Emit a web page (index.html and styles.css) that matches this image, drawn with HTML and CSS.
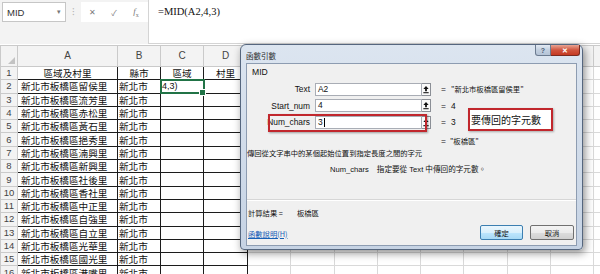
FILE: index.html
```html
<!DOCTYPE html>
<html lang="zh-Hant">
<head>
    <meta charset="UTF-8">
    <title>函數引數 - MID</title>
    <link rel="stylesheet" href="styles.css">
</head>
<body>
    <div class="topbar">
        <div class="namebox"><span>MID</span><span class="drop">▾</span></div>
        <div class="grip">⁝</div>
        <div class="fxbtns">
            <span class="ico">✕</span>
            <span class="ico">✓</span>
            <span class="ico fx"><i>f</i><sub>x</sub></span>
        </div>
        <div class="formula">=MID(A2,4,3)</div>
    </div>

    <table class="sheet">
        <colgroup>
            <col style="width:17px"><col style="width:100px"><col style="width:43px"><col style="width:43px"><col style="width:44px">
            <col class="c"><col class="c"><col class="c"><col class="c"><col class="c"><col class="c"><col class="c"><col class="c">
            <col class="last">
        </colgroup>
        <thead>
            <tr>
                <th class="corner"></th>
                <th>A</th><th>B</th><th>C</th><th>D</th><th>E</th><th>F</th><th>G</th>
                <th>H</th><th>I</th><th>J</th><th>K</th><th>L</th><th></th>
            </tr>
        </thead>
        <tbody id="sheetBody"></tbody>
    </table>

    <div class="dialog">
        <div class="titlebar">
            <span class="title">函數引數</span>
            <div class="caption">
                <span class="cap help">?</span>
                <span class="cap close">✕</span>
            </div>
        </div>
        <div class="client">
            <div class="group">
                <div class="fname">MID</div>
                <div class="args">
                    <div class="arg">
                        <label>Text</label>
                        <div class="input">A2</div>
                        <span class="ref"><svg width="9" height="13" viewBox="0 0 9 13"><path d="M4.5 2.5 L1.5 6 H3.5 V8.5 H5.5 V6 H7.5 Z" fill="#111"/><rect x="1.5" y="9.5" width="6" height="1.2" fill="#111"/></svg></span>
                        <span class="eq">=</span>
                        <span class="val cjk">"新北市板橋區留侯里"</span>
                    </div>
                    <div class="arg">
                        <label>Start_num</label>
                        <div class="input">4</div>
                        <span class="ref"><svg width="9" height="13" viewBox="0 0 9 13"><path d="M4.5 2.5 L1.5 6 H3.5 V8.5 H5.5 V6 H7.5 Z" fill="#111"/><rect x="1.5" y="9.5" width="6" height="1.2" fill="#111"/></svg></span>
                        <span class="eq">=</span>
                        <span class="val">4</span>
                    </div>
                    <div class="arg">
                        <span class="hlbox"></span>
                        <label>Num_chars</label>
                        <div class="input">3<span class="caret"></span></div>
                        <span class="ref"><svg width="9" height="13" viewBox="0 0 9 13"><path d="M4.5 2.5 L1.5 6 H3.5 V8.5 H5.5 V6 H7.5 Z" fill="#111"/><rect x="1.5" y="9.5" width="6" height="1.2" fill="#111"/></svg></span>
                        <span class="eq">=</span>
                        <span class="val">3</span>
                        <span class="note">要傳回的字元數</span>
                    </div>
                </div>
                <div class="result"><span class="eq">=</span><span class="val cjk">"板橋區"</span></div>
                <div class="desc">傳回從文字串中的某個起始位置到指定長度之間的字元</div>
                <div class="argdesc"><span class="argname">Num_chars</span>指定要從 Text 中傳回的字元數。</div>
            </div>
            <div class="calc"><span>計算結果 =</span><span class="calc-val">板橋區</span></div>
            <div class="footer">
                <a class="help-link">函數說明(H)</a>
                <div class="buttons">
                    <button class="btn default">確定</button>
                    <button class="btn">取消</button>
                </div>
            </div>
        </div>
    </div>

    <script>
        // sheet content, row 1 is the header row
        const rows = [
            ['區域及村里', '縣市', '區域', '村里'],
            ['新北市板橋區留侯里', '新北市', '4,3)', ''],
            ['新北市板橋區流芳里', '新北市', '', ''],
            ['新北市板橋區赤松里', '新北市', '', ''],
            ['新北市板橋區黃石里', '新北市', '', ''],
            ['新北市板橋區挹秀里', '新北市', '', ''],
            ['新北市板橋區湳興里', '新北市', '', ''],
            ['新北市板橋區新興里', '新北市', '', ''],
            ['新北市板橋區社後里', '新北市', '', ''],
            ['新北市板橋區香社里', '新北市', '', ''],
            ['新北市板橋區中正里', '新北市', '', ''],
            ['新北市板橋區自強里', '新北市', '', ''],
            ['新北市板橋區自立里', '新北市', '', ''],
            ['新北市板橋區光華里', '新北市', '', ''],
            ['新北市板橋區國光里', '新北市', '', ''],
            ['新北市板橋區港嘴里', '新北市', '', '']
        ];
        const emptyCols = 9;

        // build the rows of the sheet
        const body = document.getElementById('sheetBody');
        rows.forEach(function(row, i) {
            let html = '<th>' + (i + 1) + '</th>';
            row.forEach(function(value, c) {
                let cls = 'b';
                if (i === 0) cls += ' head';
                else if (c === 0) cls += ' name';
                if (i === 1 && c === 2) cls += ' sel';
                html += '<td class="' + cls + '">' + value + '</td>';
            });
            html += '<td></td>'.repeat(emptyCols);
            const tr = document.createElement('tr');
            tr.innerHTML = html;
            body.appendChild(tr);
        });
    </script>
</body>
</html>
```

FILE: styles.css
```css
* {
    box-sizing: border-box;
}

body {
    margin: 0;
    width: 600px;
    height: 274px;
    overflow: hidden;
    position: relative;
    background-color: #fff;
    font-family: 'Liberation Sans', 'Noto Sans CJK TC', sans-serif;
}

/* formula bar */
.topbar {
    display: flex;
    height: 44px;
    background-color: #f3f3f3;
}

.namebox {
    margin: 2px 0 0 2px;
    width: 64px;
    height: 20px;
    background-color: #fff;
    border: 1px solid #c6c6c6;
    display: flex;
    align-items: center;
    justify-content: space-between;
    padding: 0 4px;
    font-size: 9.5px;
    color: #333;
}

.namebox .drop {
    font-size: 7px;
    color: #777;
}

.grip {
    width: 15px;
    text-align: center;
    color: #b5b5b5;
    font-size: 10px;
    line-height: 24px;
}

.fxbtns {
    display: flex;
    align-items: center;
    height: 20px;
    margin-top: 2px;
    width: 67px;
    background-color: #fff;
}

.ico {
    width: 22px;
    text-align: center;
    font-size: 8px;
    color: #7a7a7a;
}

.ico.fx {
    font-family: 'Liberation Serif', serif;
    font-size: 9px;
}

.ico.fx sub {
    font-size: 6px;
}

.formula {
    flex: 1;
    height: 44px;
    background-color: #fff;
    border-left: 1px solid #d4d4d4;
    border-bottom: 1px solid #d4d4d4;
    padding: 5px 0 0 9px;
    font-family: 'Liberation Serif', serif;
    font-size: 10.5px;
    line-height: 14px;
    color: #111;
}

/* worksheet */
.sheet {
    margin-top: 1px;
    border-collapse: collapse;
    table-layout: fixed;
    width: 600px;
    font-family: 'Noto Sans CJK TC', sans-serif;
    font-size: 9.6px;
    color: #111;
}

.sheet col.c {
    width: 43.3px;
}

.sheet col.last {
    width: 6.6px;
}

.sheet th,
.sheet td {
    padding: 0;
    border: 1px solid #d9d9d9;
    height: 13.3px;
    line-height: 12px;
    white-space: nowrap;
    overflow: hidden;
}

.sheet th {
    background-color: #f3f3f3;
    font-family: 'Liberation Sans', sans-serif;
    font-weight: normal;
    color: #444;
    font-size: 9.5px;
    border-color: #cacaca;
}

.sheet thead th {
    height: 21px;
    font-size: 10px;
}

.sheet th.corner {
    position: relative;
}

.sheet th.corner::after {
    content: '';
    position: absolute;
    right: 2px;
    bottom: 2px;
    border-left: 7px solid transparent;
    border-bottom: 7px solid #c3c3c3;
}

.sheet td.b {
    border-color: #1c1c1c;
    padding-left: 1px;
}

.sheet td.head {
    text-align: center;
    padding-left: 0;
}

.sheet td.name {
    padding-left: 3px;
}

.sheet td.sel {
    outline: 2px solid #217346;
    outline-offset: -1px;
    position: relative;
    overflow: visible;
    font-family: 'Liberation Sans', sans-serif;
    font-size: 9px;
}

.sheet td.sel::after {
    content: '';
    position: absolute;
    right: -3px;
    bottom: -3px;
    width: 5px;
    height: 5px;
    background-color: #217346;
    border: 1px solid #fff;
}

/* function arguments dialog */
.dialog {
    position: absolute;
    left: 240px;
    top: 44px;
    width: 343px;
    height: 206px;
    padding: 0 5px 3px;
    display: flex;
    flex-direction: column;
    border: 1px solid #55667e;
    border-radius: 6px 6px 4px 4px;
    background: linear-gradient(#dce5f0, #c6d3e4);
    box-shadow: 2px 3px 8px rgba(0,0,0,0.45);
}

.titlebar {
    height: 18px;
    position: relative;
}

.title {
    font-family: 'Noto Sans CJK TC', sans-serif;
    font-size: 7.5px;
    line-height: 18px;
    color: #1e1e1e;
}

.caption {
    position: absolute;
    right: -3px;
    top: 0;
    display: flex;
}

.cap {
    height: 11px;
    display: flex;
    align-items: center;
    justify-content: center;
    color: #fff;
    font-size: 7px;
    line-height: 7px;
    font-weight: bold;
    border: 1px solid #6b7b90;
    border-top: none;
    overflow: hidden;
}

.cap.help {
    width: 16px;
    border-radius: 0 0 0 3px;
    background: linear-gradient(#e3eaf3, #c2cfdf 50%, #b5c4d7);
    color: #4c5d74;
}

.cap.close {
    width: 29px;
    border-left: none;
    border-radius: 0 0 3px 0;
    background: linear-gradient(#e9a493, #d0553f 50%, #c53a22);
    border-color: #7a2a1f;
    font-size: 6.5px;
}

.client {
    height: 183px;
    background-color: #f0f0f0;
    border: 1px solid #8d9cb1;
    display: flex;
    flex-direction: column;
    font-size: 8.4px;
    color: #111;
}

.cjk {
    font-family: 'Noto Sans CJK TC', sans-serif;
    font-size: 7.3px;
}

.group {
    height: 136px;
    border-bottom: 1px solid #d6d6d6;
    box-shadow: 0 1px 0 #fff;
}

.fname {
    height: 17px;
    line-height: 17px;
    padding-left: 5px;
    font-size: 8.6px;
}

.arg {
    position: relative;
    display: grid;
    grid-template-columns: 68px 107px 9px 20px 1fr;
    align-items: center;
    height: 16.5px;
}

.arg label {
    text-align: right;
    padding-right: 5px;
}

.input {
    height: 13px;
    line-height: 11px;
    background-color: #fff;
    border: 1px solid #a9adb5;
    padding-left: 2px;
    display: flex;
    align-items: center;
}

.caret {
    display: inline-block;
    width: 1px;
    height: 9px;
    background-color: #000;
    margin-left: 1px;
}

.ref {
    height: 13px;
    background-color: #fafafa;
    border: 1px solid #8b8f96;
    border-left: none;
    display: flex;
    align-items: center;
    justify-content: center;
}

.ref svg {
    display: block;
}

.eq {
    padding-left: 10px;
}

.hlbox {
    position: absolute;
    left: 21px;
    top: -0.5px;
    width: 159px;
    height: 18px;
    border: 2px solid #c1272d;
    box-shadow: 1px 1px 2px rgba(0,0,0,0.35);
    z-index: 1;
}

.note {
    position: absolute;
    left: 221px;
    top: -6px;
    width: 85px;
    height: 23px;
    background-color: #fff;
    border: 2px solid #c1272d;
    box-shadow: 1px 1px 2px rgba(0,0,0,0.3);
    padding-left: 1px;
    display: flex;
    align-items: center;
    font-family: 'Noto Sans CJK TC', sans-serif;
    font-size: 10px;
    color: #111;
}

.result {
    margin-top: 4.5px;
    height: 12px;
    line-height: 12px;
    padding-left: 184px;
    display: flex;
}

.result .val {
    padding-left: 4px;
}

.desc {
    height: 12px;
    line-height: 12px;
    font-family: 'Noto Sans CJK TC', sans-serif;
    font-size: 7.3px;
    padding-left: 0;
}

.argdesc {
    margin-top: 5px;
    height: 12px;
    line-height: 12px;
    padding-left: 83px;
    font-size: 7.6px;
}

.argname {
    margin-right: 8px;
}

.calc {
    margin-top: 7px;
    height: 12px;
    line-height: 12px;
    padding-left: 1px;
    font-family: 'Noto Sans CJK TC', sans-serif;
    font-size: 7.3px;
}

.calc-val {
    margin-left: 14px;
}

.footer {
    margin-top: 6px;
    height: 15px;
    display: flex;
    align-items: center;
    justify-content: space-between;
    padding: 0 2px 0 1px;
}

.help-link {
    font-family: 'Noto Sans CJK TC', sans-serif;
    font-size: 7.3px;
    color: #1660b7;
    text-decoration: underline;
    margin-top: 2px;
}

.buttons {
    display: flex;
    gap: 7px;
}

.btn {
    width: 44px;
    height: 15px;
    padding: 0;
    border: 1px solid #707070;
    border-radius: 2px;
    background: linear-gradient(#f3f3f3, #ebebeb 50%, #dddddd 50%, #d0d0d0);
    font-family: 'Noto Sans CJK TC', sans-serif;
    font-size: 7.3px;
    color: #111;
}

.btn.default {
    width: 43px;
    border-color: #3c7fb1;
    background: linear-gradient(#eaf6fd, #d9f0fc 50%, #bee6fd 50%, #a7d9f5);
}
```
